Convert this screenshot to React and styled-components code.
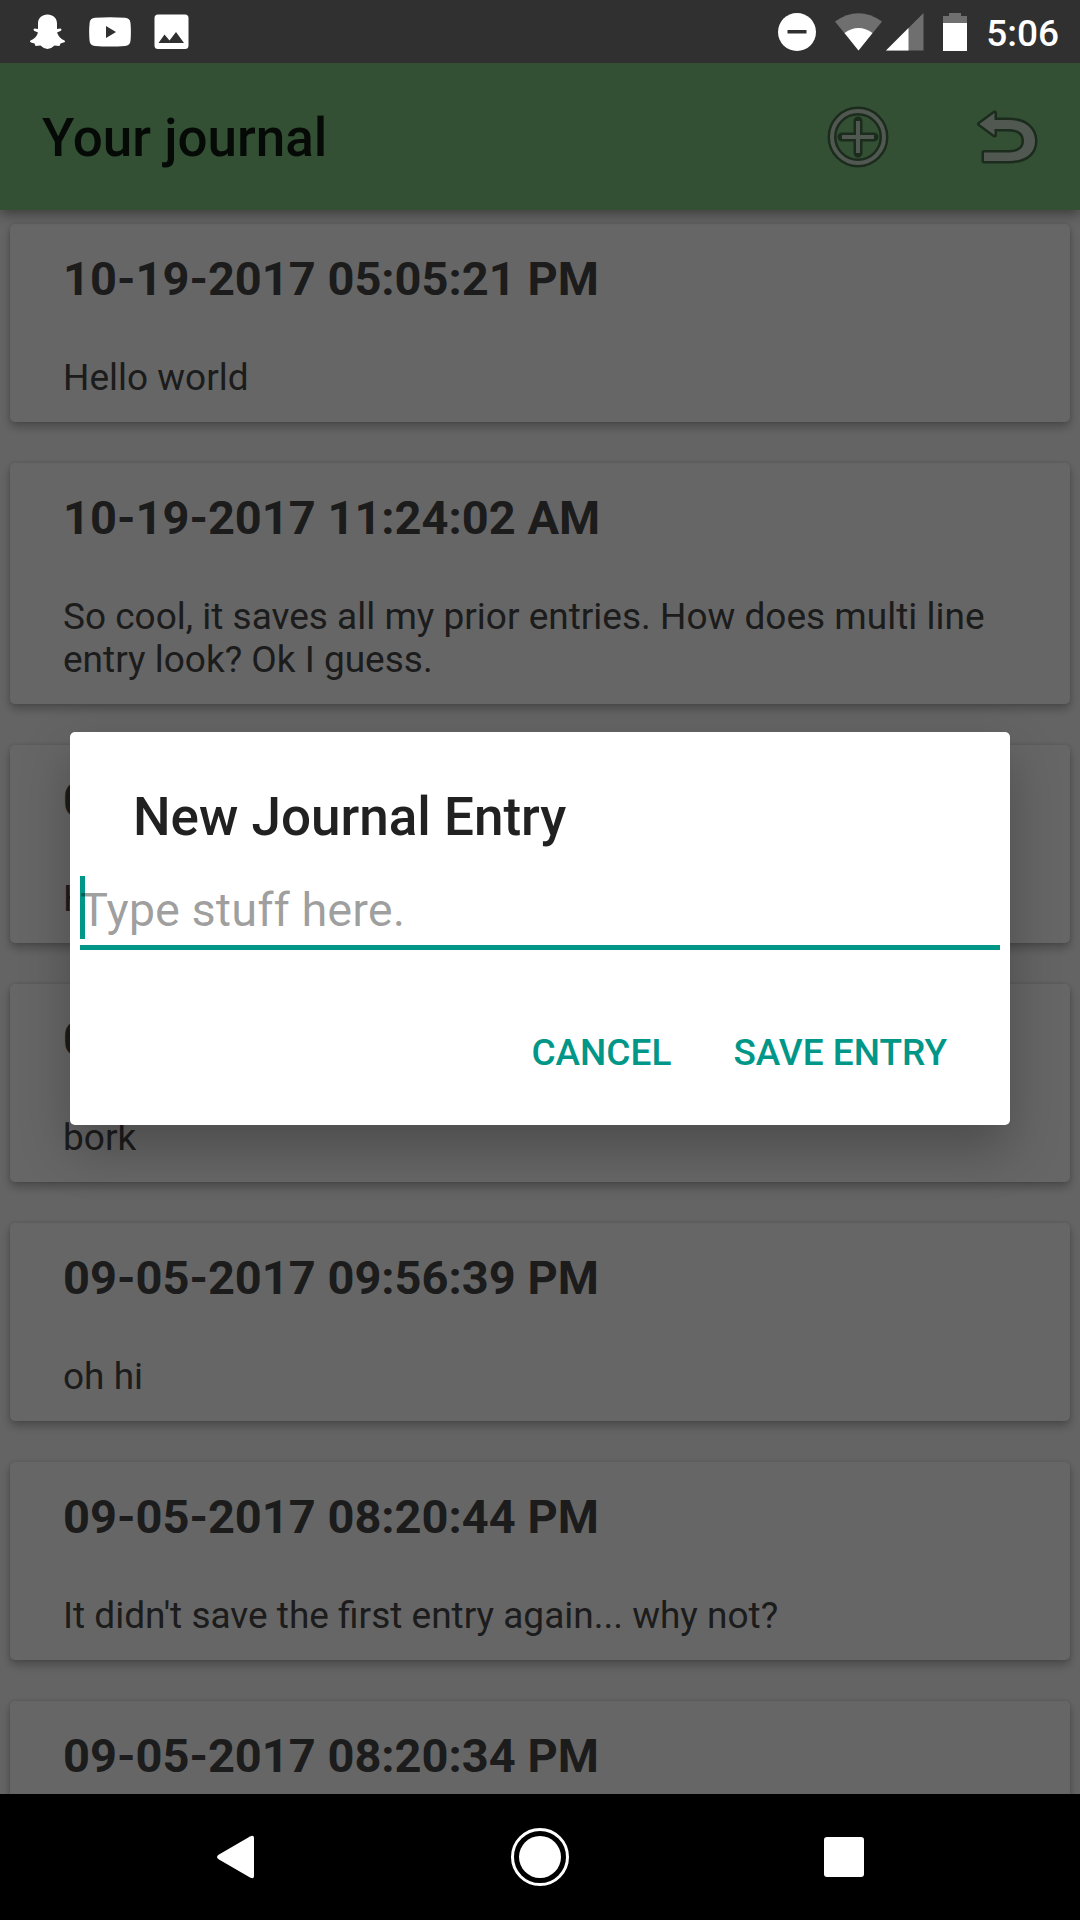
import React, { useState } from "react";
import styled, { createGlobalStyle } from "styled-components";

const entries = [
  { date: "10-19-2017 05:05:21 PM", text: "Hello world" },
  {
    date: "10-19-2017 11:24:02 AM",
    text: "So cool, it saves all my prior entries. How does multi line entry look? Ok I guess.",
  },
  { date: "09-05-2017 09:58:12 PM", text: "Hello" },
  { date: "09-05-2017 09:57:20 PM", text: "bork" },
  { date: "09-05-2017 09:56:39 PM", text: "oh hi" },
  { date: "09-05-2017 08:20:44 PM", text: "It didn't save the first entry again... why not?" },
  { date: "09-05-2017 08:20:34 PM", text: "First entry" },
];

const GlobalStyle = createGlobalStyle`
  *, *::before, *::after { box-sizing: border-box; }
  body {
    margin: 0;
    font-family: Roboto, "Noto Sans", sans-serif;
  }
  h1, h2, p { margin: 0; }
  button { font: inherit; border: 0; padding: 0; background: none; cursor: pointer; }
  svg { display: block; }
`;

const Phone = styled.div`
  display: flex;
  flex-direction: column;
  height: 100vh;
  background: #000;
`;

const StatusBar = styled.header`
  display: flex;
  align-items: center;
  justify-content: space-between;
  height: 63px;
  flex: none;
  padding: 0 21px 0 29px;
  background: #303030;
  color: #fff;
`;

const StatusGroup = styled.div`
  display: flex;
  align-items: center;
  gap: ${(p) => p.$gap}px;
`;

const Clock = styled.time`
  font-size: 37px;
  line-height: 43px;
  font-weight: 500;
  padding-top: 4px;
`;

const Screen = styled.main`
  position: relative;
  display: flex;
  flex-direction: column;
  flex: 1;
  min-height: 0;
  overflow: hidden;
  background: #fafafa;
`;

const AppBar = styled.div`
  position: relative;
  display: flex;
  align-items: center;
  flex: none;
  height: 147px;
  padding: 0 40px 0 42px;
  background: #81c784;
  box-shadow: 0 4px 12px rgba(0, 0, 0, 0.4);
`;

const AppTitle = styled.h1`
  flex: 1;
  padding-top: 3px;
  font-size: 53px;
  line-height: 61px;
  font-weight: 500;
  color: rgba(0, 0, 0, 0.87);
`;

const Actions = styled.div`
  display: flex;
  gap: 86px;
`;

const Action = styled.button`
  width: 64px;
  height: 64px;
`;

const EntryList = styled.ul`
  display: flex;
  flex-direction: column;
  gap: 41px;
  flex: 1;
  min-height: 0;
  overflow: hidden;
  margin: 0;
  padding: 14px 10px;
  list-style: none;
`;

const Card = styled.li`
  flex: none;
  padding: 27px 53px 23px;
  border-radius: 5px;
  background: #fff;
  color: #464646;
  box-shadow: 0 5px 10px rgba(0, 0, 0, 0.26), 0 0 4px rgba(0, 0, 0, 0.12);
`;

const EntryDate = styled.h2`
  margin-bottom: 50px;
  font-size: 47px;
  line-height: 55px;
  font-weight: 700;
`;

const EntryText = styled.p`
  font-size: 37px;
  line-height: 43px;
`;

const Scrim = styled.div`
  position: absolute;
  inset: 0;
  display: flex;
  align-items: center;
  padding: 0 70px;
  background: rgba(0, 0, 0, 0.6);
`;

const Dialog = styled.form`
  flex: 1;
  padding: 55px 10px 26px;
  border-radius: 5px;
  background: #fff;
  box-shadow: 0 24px 50px rgba(0, 0, 0, 0.25);
`;

const DialogTitle = styled.h2`
  margin-bottom: 28px;
  padding: 0 53px;
  font-size: 53px;
  line-height: 61px;
  font-weight: 500;
  color: #212121;
`;

const Field = styled.div`
  position: relative;
`;

const Cursor = styled.span`
  position: absolute;
  top: 0;
  left: 0;
  width: 5px;
  height: 63px;
  background: #009688;
`;

const EntryInput = styled.input`
  position: relative;
  display: block;
  width: 100%;
  height: 74px;
  padding: 0 0 2px;
  border: 0;
  border-bottom: 5px solid #009688;
  border-radius: 0;
  outline: 0;
  background: transparent;
  font: 400 47px/55px Roboto, "Noto Sans", sans-serif;
  color: #212121;
  caret-color: transparent;
  &::placeholder {
    color: rgba(0, 0, 0, 0.38);
    opacity: 1;
  }
`;

const Buttons = styled.div`
  display: flex;
  justify-content: flex-end;
  gap: 20px;
  margin-top: 55px;
  padding-right: 32px;
`;

const TextButton = styled.button`
  height: 94px;
  padding: 0 21px;
  font-size: 37px;
  line-height: 43px;
  font-weight: 500;
  text-transform: uppercase;
  color: #009688;
`;

const NavBar = styled.nav`
  display: flex;
  align-items: center;
  justify-content: center;
  gap: 240px;
  flex: none;
  height: 126px;
  background: #000;
`;

const NavButton = styled.button`
  width: 64px;
  height: 64px;
`;

const GhostIcon = () => (
  <svg width="37" height="36" viewBox="0 0 37 36" fill="#fff">
    <path d="M18.500 .5C24 .5 28 4 28 9.500V15L31.500 14.500Q33.500 15.500 31.500 17L28 18.500C29.500 22.500 32 25 35.500 26.500Q37 28 34.500 28.500L31.500 29.500L30.500 32L25.500 31.500Q22 35 18.500 35Q15 35 11.500 31.500L6.500 32L5.500 29.500L2 28.500Q0 27.500 1.500 26.500C5 25 8 22.500 9 18.500L5.500 17Q3.500 15.500 5.500 14.500L9 15V9.500C9 4 13 .5 18.500 .5Z" />
  </svg>
);

const VideoIcon = () => (
  <svg width="42" height="30" viewBox="0 0 42 30">
    <path fill="#fff" fillRule="evenodd" d="M6 .8Q21-.5 36 .8Q41 1.200 41.500 6Q42.300 15 41.500 24Q41 28.500 36 29Q21 30 6 29Q1 28.500.6 24Q-.3 15 .6 6Q1 1.200 6 .8ZM17 9V21L27 15Z" />
  </svg>
);

const ImageIcon = () => (
  <svg width="35" height="36" viewBox="0 0 35 36">
    <path fill="#fff" fillRule="evenodd" d="M4 .5H31Q34.500.5 34.500 4V31.500Q34.500 35 31 35H4Q.5 35 .5 31.500V4Q.5.5 4 .5ZM4.500 29H30L22 18L15.500 26.500L10.500 20.500Z" />
  </svg>
);

const DndIcon = () => (
  <svg width="38" height="38" viewBox="0 0 38 38">
    <circle cx="19" cy="19" r="19" fill="#fff" />
    <path fill="#303030" d="M9.500 17H28.500V20.500H9.500Z" />
  </svg>
);

const SignalIcons = () => (
  <svg width="89" height="38" viewBox="0 0 89 38">
    <path fill="#6f6f6f" d="M0 8.500Q23.500-8 47 8.500L23.500 37.500Z" />
    <path fill="#fff" d="M9.500 20Q23.500 10 37.500 20L23.500 37.500Z" />
    <path fill="#6f6f6f" d="M51 37.500L88.500 0V37.500Z" />
    <path fill="#fff" d="M51 37.500L73.500 15V37.500Z" />
  </svg>
);

const BatteryIcon = () => (
  <svg width="24" height="38" viewBox="0 0 24 38">
    <path fill="#6f6f6f" d="M6 0H18V3H24V11H0V3H6Z" />
    <path fill="#fff" d="M0 10H24V38H0Z" />
  </svg>
);

const AddIcon = () => (
  <svg width="64" height="64" viewBox="0 0 64 64" fill="none">
    <circle cx="32" cy="32" r="26" stroke="#466e48" strokeWidth="9" />
    <path d="M32 16V48M16 32H48" stroke="#466e48" strokeWidth="9" strokeLinecap="round" />
    <circle cx="32" cy="32" r="26" stroke="#cbdccb" strokeWidth="4" />
    <path d="M32 16V48M16 32H48" stroke="#cbdccb" strokeWidth="4" />
  </svg>
);

const UndoIcon = () => (
  <svg width="64" height="64" viewBox="0 0 64 64">
    <path
      d="M3.500 19L18.500 8V15H32C49 15 59 23 59 36C59 49 49 56 32 56H8V47.500H32C43 47.500 48 43 48 36C48 28.500 43 24 32 24H18.500V30Z"
      fill="#cbdccb"
      stroke="#466e48"
      strokeWidth="5"
      strokeLinejoin="round"
      paintOrder="stroke"
    />
  </svg>
);

const BackIcon = () => (
  <svg width="64" height="64" viewBox="0 0 64 64">
    <path fill="#fff" d="M15 29.500L46 11.500Q50 9.500 50 13V51Q50 54.500 46 52.500L15 34.500Q11 32 15 29.500Z" />
  </svg>
);

const HomeIcon = () => (
  <svg width="64" height="64" viewBox="0 0 64 64">
    <circle cx="32" cy="32" r="27.500" fill="none" stroke="#fff" strokeWidth="3" />
    <circle cx="32" cy="32" r="21" fill="#fff" />
  </svg>
);

const RecentIcon = () => (
  <svg width="64" height="64" viewBox="0 0 64 64">
    <rect x="12" y="12" width="40" height="40" rx="3" fill="#fff" />
  </svg>
);

export default function App() {
  const [draft, setDraft] = useState("");
  return (
    <Phone>
      <GlobalStyle />
      <StatusBar>
        <StatusGroup $gap={23}>
          <GhostIcon />
          <VideoIcon />
          <ImageIcon />
        </StatusGroup>
        <StatusGroup $gap={19}>
          <DndIcon />
          <SignalIcons />
          <BatteryIcon />
          <Clock>5:06</Clock>
        </StatusGroup>
      </StatusBar>
      <Screen>
        <AppBar>
          <AppTitle>Your journal</AppTitle>
          <Actions>
            <Action type="button" aria-label="Add entry">
              <AddIcon />
            </Action>
            <Action type="button" aria-label="Undo">
              <UndoIcon />
            </Action>
          </Actions>
        </AppBar>
        <EntryList>
          {entries.map((entry) => (
            <Card key={entry.date}>
              <EntryDate>{entry.date}</EntryDate>
              <EntryText>{entry.text}</EntryText>
            </Card>
          ))}
        </EntryList>
        <Scrim>
          <Dialog
            role="dialog"
            aria-labelledby="dialog-title"
            onSubmit={(event) => event.preventDefault()}
          >
            <DialogTitle id="dialog-title">New Journal Entry</DialogTitle>
            <Field>
              <Cursor />
              <EntryInput
                type="text"
                aria-labelledby="dialog-title"
                placeholder="Type stuff here."
                value={draft}
                onChange={(event) => setDraft(event.target.value)}
              />
            </Field>
            <Buttons>
              <TextButton type="button">Cancel</TextButton>
              <TextButton type="submit">Save entry</TextButton>
            </Buttons>
          </Dialog>
        </Scrim>
      </Screen>
      <NavBar>
        <NavButton type="button" aria-label="Back">
          <BackIcon />
        </NavButton>
        <NavButton type="button" aria-label="Home">
          <HomeIcon />
        </NavButton>
        <NavButton type="button" aria-label="Recent apps">
          <RecentIcon />
        </NavButton>
      </NavBar>
    </Phone>
  );
}
